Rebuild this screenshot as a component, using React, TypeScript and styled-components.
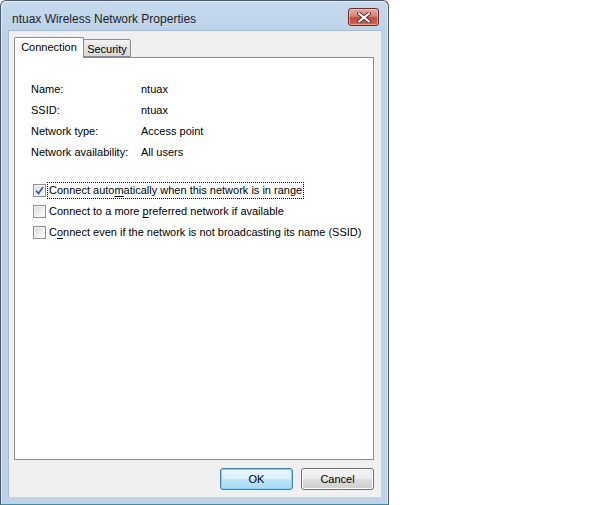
import styled, { createGlobalStyle } from "styled-components";

const GlobalStyle = createGlobalStyle`
  html, body {
    margin: 0;
    padding: 0;
    background: #ffffff;
  }
  body {
    font-family: "Liberation Sans", Arial, sans-serif;
    font-size: 11px;
    color: #000;
  }
`;

// Network details shown in the top section of the tab
const details = [
  { label: "Name:", value: "ntuax" },
  { label: "SSID:", value: "ntuax" },
  { label: "Network type:", value: "Access point" },
  { label: "Network availability:", value: "All users" },
];

function CheckMark() {
  return (
    <svg width="9" height="9" viewBox="0 0 9 9">
      <path d="M1 4.5 L3.5 7.5 L8 1" fill="none" stroke="#4a5f97" strokeWidth="1.8" />
    </svg>
  );
}

function CloseGlyph() {
  return (
    <svg width="14" height="11" viewBox="0 0 14 11">
      <path d="M2 1.5 L12 9.5 M12 1.5 L2 9.5" stroke="#5a2a2a" strokeWidth="4" strokeLinecap="round" />
      <path d="M2 1.5 L12 9.5 M12 1.5 L2 9.5" stroke="#ffffff" strokeWidth="2.2" strokeLinecap="round" />
    </svg>
  );
}

function Option({ checked, focused, children }: { checked?: boolean; focused?: boolean; children: React.ReactNode }) {
  return (
    <OptionRow>
      <Box>{checked && <CheckMark />}</Box>
      <OptionText focused={focused}>{children}</OptionText>
    </OptionRow>
  );
}

export default function App() {
  return (
    <>
      <GlobalStyle />
      <Window>
        <TitleBar>
          <Title>ntuax Wireless Network Properties</Title>
          <CloseButton>
            <CloseGlyph />
          </CloseButton>
        </TitleBar>
        <Client>
          <TabStrip>
            <Tab selected width={70}>Connection</Tab>
            <Tab width={48}>Security</Tab>
          </TabStrip>
          <Panel>
            <Details>
              {details.map((d) => (
                <DetailRow key={d.label}>
                  <DetailLabel>{d.label}</DetailLabel>
                  <span>{d.value}</span>
                </DetailRow>
              ))}
            </Details>
            <Options>
              <Option checked focused>
                Connect auto<u>m</u>atically when this network is in range
              </Option>
              <Option>
                Connect to a more <u>p</u>referred network if available
              </Option>
              <Option>
                C<u>o</u>nnect even if the network is not broadcasting its name (SSID)
              </Option>
            </Options>
          </Panel>
          <Footer>
            <Button primary>OK</Button>
            <Button>Cancel</Button>
          </Footer>
        </Client>
      </Window>
    </>
  );
}

const Window = styled.div`
  width: 389px;
  height: 505px;
  box-sizing: border-box;
  border: 1px solid #4d5a69;
  border-bottom-color: #3f8fa0;
  border-radius: 6px 6px 0 0;
  background: linear-gradient(to bottom, #c7daee 0px, #bcd3ea 30px, #bcd3ea 100%);
  display: flex;
  flex-direction: column;
  padding: 0 7px 7px 7px;
  box-shadow: inset 1px 1px 0 #dbe8f5, inset -1px 0 0 #dbe8f5;
`;

const TitleBar = styled.div`
  height: 29px;
  display: flex;
  align-items: center;
  justify-content: space-between;
  padding-left: 4px;
  padding-right: 2px;
`;

const Title = styled.div`
  font-size: 12px;
  color: #1e1e1e;
  margin-top: 7px;
  white-space: nowrap;
`;

const CloseButton = styled.div`
  width: 29px;
  height: 16px;
  margin-top: 3px;
  border: 1px solid #6b2c2c;
  border-radius: 3px;
  background: linear-gradient(to bottom, #e8a99f 0%, #d8817a 45%, #c24a3a 55%, #cf6a52 100%);
  box-shadow: inset 0 0 0 1px rgba(255, 220, 210, 0.5);
  display: flex;
  align-items: center;
  justify-content: center;
`;

const Client = styled.div`
  flex: 1;
  background: #f0f0f0;
  border: 1px solid #a5bcd4;
  border-width: 1px 0 0 1px;
  display: flex;
  flex-direction: column;
  padding: 6px 7px 7px 5px;
`;

const TabStrip = styled.div`
  height: 20px;
  display: flex;
  align-items: flex-end;
  position: relative;
  z-index: 1;
`;

const Tab = styled.div<{ selected?: boolean; width: number }>`
  box-sizing: border-box;
  width: ${(p) => p.width}px;
  height: ${(p) => (p.selected ? "21px" : "18px")};
  margin-bottom: ${(p) => (p.selected ? "-1px" : "0")};
  margin-left: ${(p) => (p.selected ? "0" : "-1px")};
  padding-top: ${(p) => (p.selected ? "3px" : "1px")};
  border: 1px solid #898c95;
  border-bottom: ${(p) => (p.selected ? "none" : "1px solid #898c95")};
  border-radius: 2px 2px 0 0;
  background: ${(p) => (p.selected ? "#ffffff" : "linear-gradient(to bottom, #f2f2f2, #e3e3e3 50%, #d9d9d9)")};
  display: flex;
  justify-content: center;
  align-items: ${(p) => (p.selected ? "flex-start" : "center")};
  z-index: ${(p) => (p.selected ? 2 : 1)};
  white-space: nowrap;
`;

const Panel = styled.div`
  flex: 1;
  background: #ffffff;
  border: 1px solid #898c95;
  padding: 20px 16px 0 16px;
`;

const Details = styled.div`
  display: flex;
  flex-direction: column;
`;

const DetailRow = styled.div`
  display: flex;
  height: 21px;
  align-items: center;
  white-space: nowrap;
`;

const DetailLabel = styled.span`
  width: 110px;
`;

const Options = styled.div`
  margin-top: 18px;
  padding-left: 2px;
  display: flex;
  flex-direction: column;
`;

const OptionRow = styled.div`
  display: flex;
  height: 21px;
  align-items: center;
  white-space: nowrap;
`;

const Box = styled.div`
  box-sizing: border-box;
  flex-shrink: 0;
  width: 13px;
  height: 13px;
  border: 1px solid #8e8f8f;
  background: linear-gradient(135deg, #d9d9d9 0%, #f0f0f0 60%, #ffffff 100%);
  box-shadow: inset 0 0 0 1px #f4f4f4;
  display: flex;
  align-items: center;
  justify-content: center;
  margin-right: 2px;
`;

const OptionText = styled.span<{ focused?: boolean }>`
  padding: 0 1px;
  line-height: 15px;
  outline: ${(p) => (p.focused ? "1px dotted #000" : "none")};
  u {
    text-underline-offset: 2px;
  }
`;

const Footer = styled.div`
  display: flex;
  justify-content: flex-end;
  gap: 8px;
  margin-top: 8px;
`;

const Button = styled.div<{ primary?: boolean }>`
  box-sizing: border-box;
  width: 73px;
  height: 22px;
  border: 1px solid ${(p) => (p.primary ? "#3c7fb1" : "#707070")};
  border-radius: 3px;
  background: ${(p) =>
    p.primary
      ? "linear-gradient(to bottom, #eaf6fd 0%, #d9f0fc 50%, #bee6fd 51%, #a7d9f5 100%)"
      : "linear-gradient(to bottom, #f2f2f2 0%, #ebebeb 50%, #dddddd 51%, #cfcfcf 100%)"};
  box-shadow: ${(p) => (p.primary ? "inset 0 0 0 1px #7fd6f8" : "inset 0 0 0 1px #fcfcfc")};
  display: flex;
  align-items: center;
  justify-content: center;
`;
